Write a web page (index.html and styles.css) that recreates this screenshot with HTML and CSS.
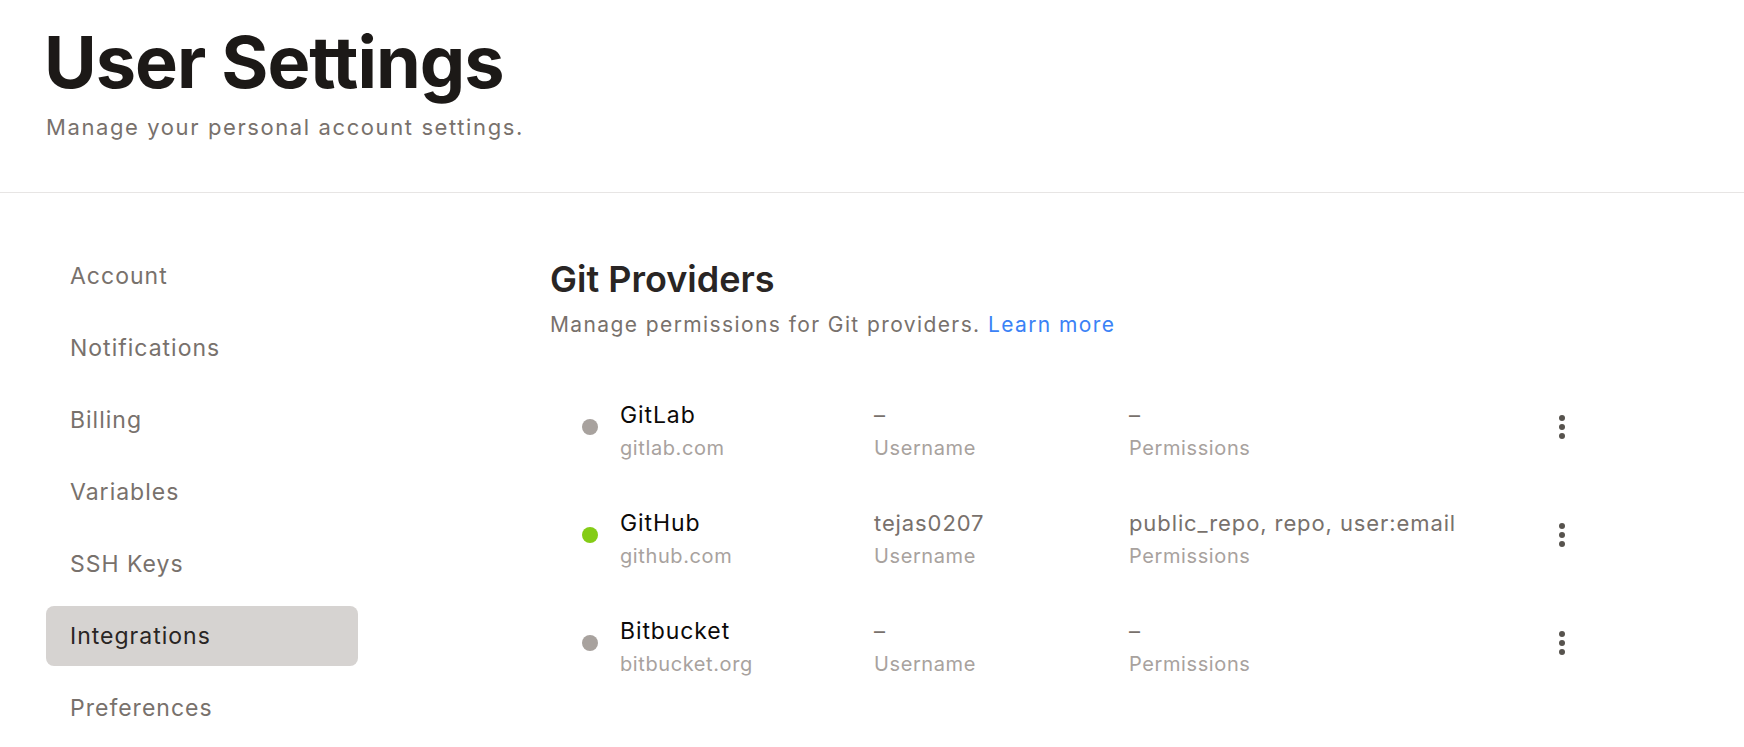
FILE: index.html
```html
<!DOCTYPE html>
<html lang="en">
<head>
<meta charset="utf-8">
<title>User Settings</title>
<link rel="stylesheet" href="styles.css">
</head>
<body>
<header class="page-header">
  <h1 class="page-title">User Settings</h1>
  <p class="page-subtitle">Manage your personal account settings.</p>
</header>
<main class="layout">
  <nav class="sidebar">
    <a class="nav-item">Account</a>
    <a class="nav-item">Notifications</a>
    <a class="nav-item">Billing</a>
    <a class="nav-item">Variables</a>
    <a class="nav-item">SSH Keys</a>
    <a class="nav-item active">Integrations</a>
    <a class="nav-item">Preferences</a>
  </nav>
  <section class="content">
    <h2 class="section-title">Git Providers</h2>
    <p class="section-desc">Manage permissions for Git providers. <a class="link">Learn more</a></p>
    <div class="providers">
      <div class="provider">
        <span class="status"></span>
        <div class="cell name-cell">
          <div class="name">GitLab</div>
          <div class="sub">gitlab.com</div>
        </div>
        <div class="cell">
          <div class="value">–</div>
          <div class="sub">Username</div>
        </div>
        <div class="cell perm-cell">
          <div class="value">–</div>
          <div class="sub">Permissions</div>
        </div>
        <button class="kebab" aria-label="More"><i></i><i></i><i></i></button>
      </div>
      <div class="provider">
        <span class="status on"></span>
        <div class="cell name-cell">
          <div class="name">GitHub</div>
          <div class="sub">github.com</div>
        </div>
        <div class="cell">
          <div class="value">tejas0207</div>
          <div class="sub">Username</div>
        </div>
        <div class="cell perm-cell">
          <div class="value">public_repo, repo, user:email</div>
          <div class="sub">Permissions</div>
        </div>
        <button class="kebab" aria-label="More"><i></i><i></i><i></i></button>
      </div>
      <div class="provider">
        <span class="status"></span>
        <div class="cell name-cell">
          <div class="name">Bitbucket</div>
          <div class="sub">bitbucket.org</div>
        </div>
        <div class="cell">
          <div class="value">–</div>
          <div class="sub">Username</div>
        </div>
        <div class="cell perm-cell">
          <div class="value">–</div>
          <div class="sub">Permissions</div>
        </div>
        <button class="kebab" aria-label="More"><i></i><i></i><i></i></button>
      </div>
    </div>
  </section>
</main>
</body>
</html>
```
FILE: styles.css
```css
* { box-sizing: border-box; }
html, body { margin: 0; padding: 0; background: #ffffff; }
body {
  font-family: "Inter", "Noto Sans", "Liberation Sans", sans-serif;
  color: #1c1917;
  overflow: hidden;
}
.page-header {
  padding: 26px 44px 51px;
  border-bottom: 1px solid #e7e5e4;
}
.page-title {
  margin: 0;
  font-size: 72px;
  line-height: 72px;
  font-weight: 700;
  letter-spacing: -0.014em;
  color: #1c1917;
}
.page-subtitle {
  margin: 15px 0 0 2px;
  font-size: 22px;
  line-height: 28px;
  color: #78716c;
  letter-spacing: 1.6px;
}
.layout {
  display: flex;
  padding: 53px 0 0 46px;
}
.sidebar {
  width: 312px;
  flex: none;
  display: flex;
  flex-direction: column;
  gap: 12px;
}
.nav-item {
  display: block;
  height: 60px;
  line-height: 60px;
  padding-left: 24px;
  border-radius: 8px;
  font-size: 23px;
  color: #78716c;
  letter-spacing: 1px;
}
.nav-item.active {
  background: #d6d3d1;
  color: #292524;
}
.content {
  margin-left: 192px;
  flex: 1;
  padding-top: 13px;
}
.section-title {
  margin: 0;
  font-size: 36px;
  line-height: 40px;
  font-weight: 600;
  color: #292524;
}
.section-desc {
  margin: 12px 0 0;
  font-size: 21px;
  line-height: 28px;
  color: #78716c;
  letter-spacing: 1.4px;
}
.link { color: #3b82f6; }
.providers {
  margin-top: 61px;
  padding-left: 32px;
  display: flex;
  flex-direction: column;
  gap: 46px;
}
.provider {
  display: flex;
  align-items: flex-start;
}
.status {
  width: 16px;
  height: 16px;
  border-radius: 50%;
  background: #a8a29e;
  margin-top: 19px;
  margin-right: 22px;
  flex: none;
}
.status.on { background: #84cc16; }
.cell { width: 255px; flex: none; padding-top: 1px; }
.name-cell { width: 254px; }
.perm-cell { width: 421px; }
.name {
  font-size: 23px;
  line-height: 28px;
  color: #0c0a09;
  letter-spacing: 0.9px;
}
.value {
  font-size: 22px;
  line-height: 28px;
  color: #78716c;
  letter-spacing: 0.9px;
}
.sub {
  margin-top: 5px;
  font-size: 20px;
  line-height: 28px;
  color: #a8a29e;
  letter-spacing: 0.6px;
}
.kebab {
  width: 24px;
  height: 28px;
  margin-top: 13px;
  padding: 0;
  border: 0;
  background: transparent;
  display: flex;
  flex-direction: column;
  align-items: center;
  justify-content: center;
  gap: 3px;
}
.kebab i {
  display: block;
  width: 6px;
  height: 6px;
  border-radius: 50%;
  background: #57534e;
}
```
